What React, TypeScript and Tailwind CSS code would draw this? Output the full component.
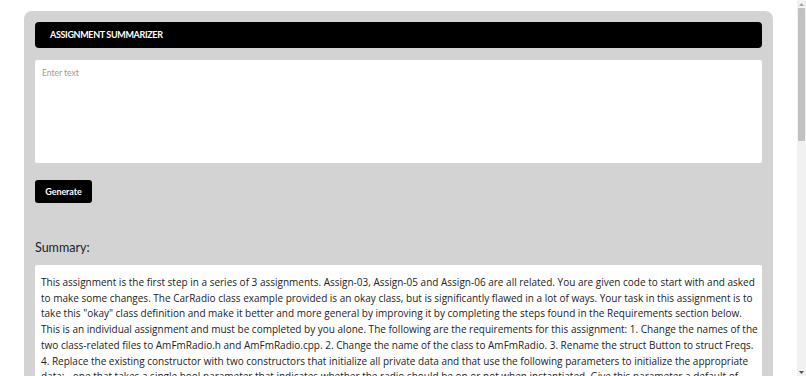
import React from "react";

const lines = [
  "This assignment is the first step in a series of 3 assignments. Assign-03, Assign-05 and Assign-06 are all related. You are given code to start with and asked",
  "to make some changes. The CarRadio class example provided is an okay class, but is significantly flawed in a lot of ways. Your task in this assignment is to",
  "take this \"okay\" class definition and make it better and more general by improving it by completing the steps found in the Requirements section below.",
  "This is an individual assignment and must be completed by you alone. The following are the requirements for this assignment: 1. Change the names of the",
  "two class-related files to AmFmRadio.h and AmFmRadio.cpp. 2. Change the name of the class to AmFmRadio. 3. Rename the struct Button to struct Freqs.",
  "4. Replace the existing constructor with two constructors that initialize all private data and that use the following parameters to initialize the appropriate",
  "data: - one that takes a single bool parameter that indicates whether the radio should be on or not when instantiated. Give this parameter a default of",
  "false. - one that takes a bool parameter and a Freqs array parameter that initializes the preset frequencies to the values in the array.",
];

export default function App() {
  return (
    <div
      className="flex h-screen w-full overflow-hidden bg-white"
      style={{ fontFamily: 'Lato, "Open Sans", sans-serif' }}
    >
      <div className="flex-1 overflow-hidden">
        <div className="mt-[11px] ml-[24px] w-[749px] rounded-[8px] bg-[#d3d3d3] px-[11px] pt-[11px] pb-[20px]">
          <div className="flex h-[26px] items-center rounded-[4px] bg-black pl-[15px]">
            <span className="text-[9px] font-bold uppercase tracking-[-0.35px] text-white">
              Assignment Summarizer
            </span>
          </div>
          <div className="mt-[12px] h-[103px] rounded-[2px] bg-white px-[7px] pt-[7px] text-[8.5px] leading-[12px]">
            <span className="text-[#9a9a9a]">Enter text</span>
          </div>
          <button className="mt-[17px] flex h-[23px] w-[57px] items-center justify-center rounded-[3px] bg-black text-[9px] font-bold tracking-[-0.1px] text-white">
            Generate
          </button>
          <div className="mt-[36px] text-[12.5px] leading-[18px] text-[#222]">Summary:</div>
          <div
            className="mt-[8px] overflow-hidden rounded-[2px] bg-white pl-[6px] pt-[10px] pb-[6px] text-[10px] leading-[15.7px] text-[#222]"
            style={{ fontFamily: '"Open Sans", sans-serif' }}
          >
            {lines.map((l, i) => (
              <div key={i} className="whitespace-nowrap">
                {l}
              </div>
            ))}
          </div>
        </div>
      </div>
      <div className="flex h-full w-[9px] flex-col items-center bg-[#f1f1f1]">
        <div className="flex h-[8px] items-center justify-center">
          <svg width="5" height="3" viewBox="0 0 5 3">
            <path d="M2.5 0L5 3H0z" fill="#a3a3a3" />
          </svg>
        </div>
        <div className="h-[133px] w-[7px] rounded-[1px] bg-[#c1c1c1]" />
        <div className="flex-1" />
        <div className="flex h-[8px] items-center justify-center">
          <svg width="5" height="3" viewBox="0 0 5 3">
            <path d="M0 0H5L2.5 3z" fill="#505050" />
          </svg>
        </div>
      </div>
    </div>
  );
}
